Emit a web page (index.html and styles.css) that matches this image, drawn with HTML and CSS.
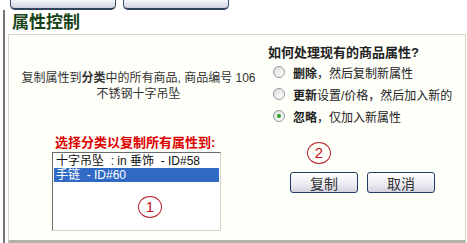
FILE: index.html
```html
<!DOCTYPE html>
<html>
<head>
  <meta charset="utf-8">
  <title>属性控制</title>
  <link rel="stylesheet" href="styles.css">
</head>
<body>
  <div class="tabs">
    <div class="tab"></div>
    <div class="tab"></div>
  </div>

  <div class="main">
    <h2 class="title">属性控制</h2>

    <div class="panel">
      <div class="left-col">
        <p class="intro">复制属性到<b>分类</b>中的所有商品, 商品编号 106<br>不锈钢十字吊坠</p>
        <div class="pick-label">选择分类以复制所有属性到:</div>
        <div class="listbox">
          <div class="option">十字吊坠&nbsp; : in 垂饰&nbsp; - ID#58</div>
          <div class="option selected">手链&nbsp; - ID#60</div>
          <span class="mark mark-one">1</span>
        </div>
      </div>

      <div class="right-col">
        <div class="question">如何处理现有的商品属性?</div>
        <label class="choice"><span class="radio"></span><span><b>删除</b>，然后复制新属性</span></label>
        <label class="choice"><span class="radio"></span><span><b>更新</b>设置/价格，然后加入新的</span></label>
        <label class="choice"><span class="radio checked"></span><span><b>忽略</b>，仅加入新属性</span></label>

        <div class="buttons">
          <button class="btn">复制</button>
          <button class="btn">取消</button>
        </div>
        <span class="mark mark-two">2</span>
      </div>
    </div>
  </div>
</body>
</html>
```

FILE: styles.css
```css
body {
  margin: 0;
  font-family: "Liberation Sans", "Noto Sans CJK SC", sans-serif;
  font-size: 12px;
  color: #222;
  background-color: #fff;
}

/* bottoms of the buttons cut off at the top */
.tabs {
  display: flex;
  gap: 7px;
  height: 10px;
  padding-left: 10px;
  overflow: hidden;
}

.tab {
  width: 104px;
  height: 8px;
  border: 1px solid #3b5068;
  border-top: none;
  border-bottom: 2px solid #2f435c;
  border-radius: 0 0 5px 5px;
  background: linear-gradient(#f6f7f9, #cdd3de);
}

.main {
  margin-left: 3px;
  padding-left: 3px;
  border-left: 2px solid #767676;
}

.title {
  margin: 0;
  height: 24px;
  padding-left: 4px;
  line-height: 26px;
  font-size: 17px;
  font-weight: bold;
  color: #164216;
}

.panel {
  display: flex;
  box-sizing: border-box;
  width: 458px;
  height: 209px;
  background-color: #fffffa;
  border: 1px solid #d8d5cc;
  border-bottom: 3px solid #b4b1a5;
}

.left-col {
  width: 259px;
  padding-top: 35px;
}

.intro {
  margin: 0;
  text-align: center;
  line-height: 16px;
  color: #333;
}

.pick-label {
  margin-top: 33px;
  padding-left: 46px;
  line-height: 16px;
  font-size: 13px;
  font-weight: bold;
  color: #dd0000;
}

.listbox {
  position: relative;
  box-sizing: border-box;
  width: 169px;
  height: 79px;
  margin: 1px 0 0 43px;
  padding: 1px;
  background-color: #fff;
  border: 1px solid #d4d0c8;
  border-top-color: #6c6c6c;
  border-left-color: #6c6c6c;
}

.option {
  height: 14px;
  line-height: 14px;
  padding-left: 2px;
  color: #111;
  white-space: nowrap;
}

.option.selected {
  background-color: #316ac5;
  color: #fff;
}

/* hand drawn red markers */
.mark {
  position: absolute;
  box-sizing: border-box;
  width: 24px;
  height: 22px;
  border: 1px solid #b8202a;
  border-radius: 50%;
  text-align: center;
  line-height: 20px;
  font-size: 15px;
  color: #c0101c;
}

.mark-one {
  left: 85px;
  top: 43px;
}

.right-col {
  position: relative;
  flex: 1;
  padding-top: 10px;
}

.question {
  line-height: 16px;
  font-size: 13px;
  font-weight: bold;
  color: #222;
}

.choice {
  display: flex;
  align-items: center;
  gap: 8px;
  height: 22px;
  padding-left: 5px;
  color: #222;
}

.radio {
  position: relative;
  box-sizing: border-box;
  width: 12px;
  height: 12px;
  border: 1px solid #8e9aa8;
  border-radius: 50%;
  background: linear-gradient(135deg, #dcdcd6, #ffffff);
}

.radio.checked:after {
  content: "";
  position: absolute;
  top: 3px;
  left: 3px;
  width: 4px;
  height: 4px;
  border-radius: 50%;
  background-color: #2aa22a;
}

.buttons {
  display: flex;
  gap: 9px;
  margin: 45px 0 0 22px;
}

.btn {
  width: 68px;
  height: 21px;
  padding: 0;
  font-family: "Liberation Sans", "Noto Sans CJK SC", sans-serif;
  font-size: 14px;
  color: #333;
  border: 1px solid #1f3f66;
  border-radius: 3px;
  background: linear-gradient(#ffffff, #ecebf2 60%, #d3d2e0);
}

.mark-two {
  left: 39px;
  top: 107px;
}
```
